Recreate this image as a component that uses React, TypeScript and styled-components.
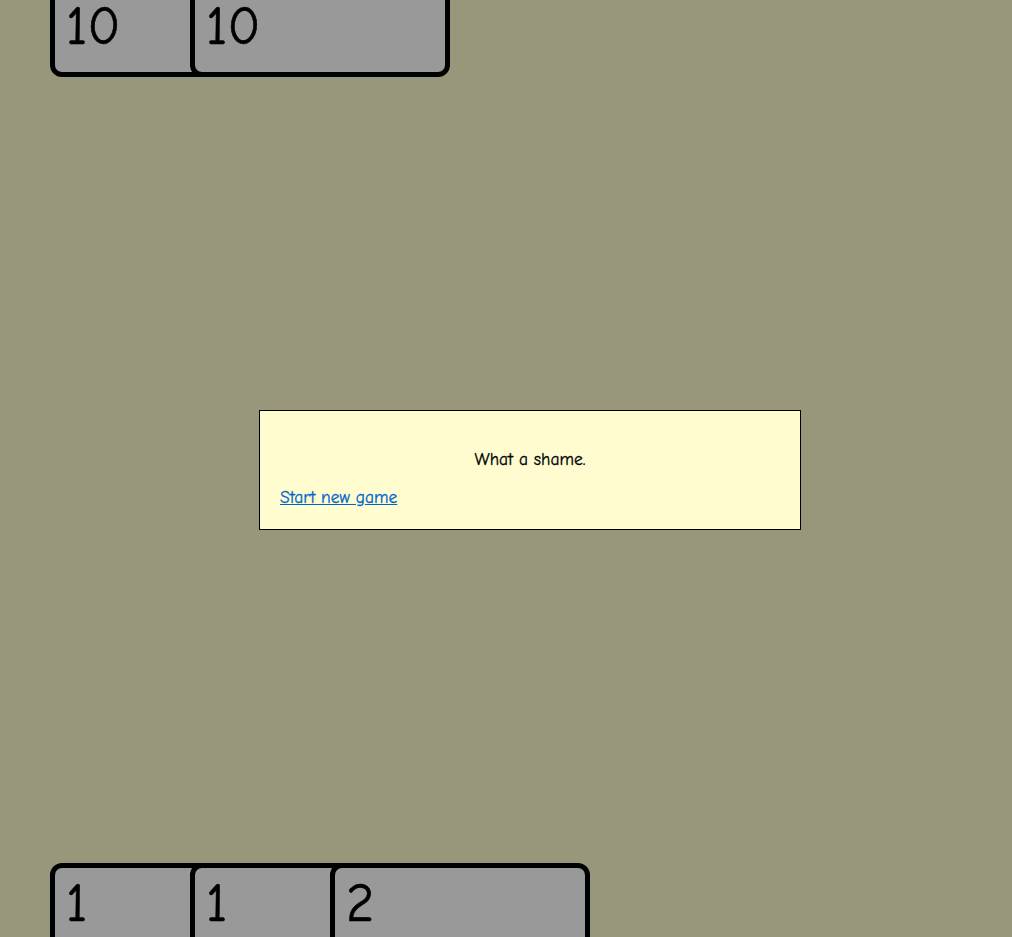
import React from "react";
import styled, { createGlobalStyle } from "styled-components";

const Global = createGlobalStyle`
  html, body { margin: 0; padding: 0; }
  body {
    background: #98977c;
    font-family: "Comic Sans MS", "Comic Neue", "DejaVu Sans", sans-serif;
    overflow: hidden;
  }
`;

const Table = styled.div`
  position: relative;
  height: 937px;
  overflow: hidden;
  display: flex;
  flex-direction: column;
  padding-left: 50px;
`;

const Hand = styled.div<{ $top?: boolean }>`
  display: flex;
  flex-direction: row;
  margin-top: ${(p) => (p.$top ? "-12px" : "0")};
  margin-bottom: ${(p) => (p.$top ? "0" : "-15px")};
`;

const Spacer = styled.div`
  flex: 1;
`;

const Card = styled.div<{ $top?: boolean }>`
  box-sizing: border-box;
  width: 260px;
  height: 89px;
  flex: none;
  background: #999999;
  border: 5px solid #000;
  border-radius: 12px;
  padding: ${(p) => (p.$top ? "7px" : "9px")} 0 0 11px;
  font-size: 54px;
  line-height: 1;
  color: #000;
  -webkit-text-stroke: 0.6px #000;
  & + & {
    margin-left: -120px;
  }
`;

const Dialog = styled.div`
  position: absolute;
  left: 259px;
  top: 410px;
  width: 542px;
  height: 120px;
  box-sizing: border-box;
  background: #fffdd0;
  border: 1px solid #000;
  padding: 38px 20px 0 20px;
  font-size: 17.5px;
  line-height: 20px;
  color: #000;
  -webkit-text-stroke: 0.3px currentColor;
`;

const Message = styled.div`
  text-align: center;
`;

const Link = styled.a`
  display: inline-block;
  margin-top: 18px;
  color: #0066cc;
  text-decoration: underline;
  cursor: pointer;
`;

export default function App() {
  return (
    <>
      <Global />
      <Table>
        <Hand $top>
          <Card $top>10</Card>
          <Card $top>10</Card>
        </Hand>
        <Spacer />
        <Hand>
          <Card>1</Card>
          <Card>1</Card>
          <Card>2</Card>
        </Hand>
        <Dialog>
          <Message>What a shame.</Message>
          <Link href="#">Start new game</Link>
        </Dialog>
      </Table>
    </>
  );
}
